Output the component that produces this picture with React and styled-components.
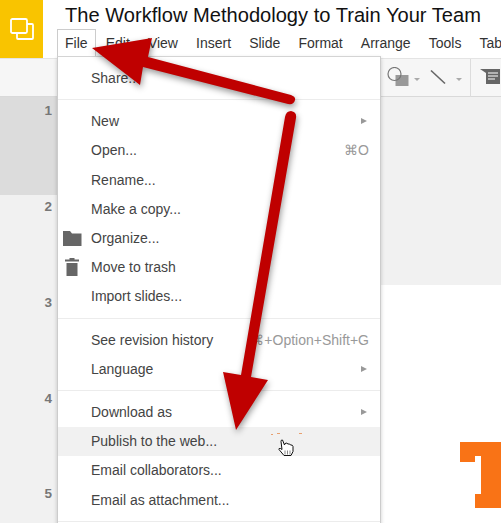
import React from 'react';
import styled, { createGlobalStyle } from 'styled-components';

const GlobalStyle = createGlobalStyle`
  html, body {
    margin: 0;
    padding: 0;
    background: white;
    overflow: hidden;
  }
`;

const Page = styled.div`
  position: relative;
  width: 501px;
  height: 523px;
  overflow: hidden;
  font-family: "Liberation Sans", Arial, sans-serif;
  display: flex;
  flex-direction: column;
`;

const Header = styled.header`
  height: 58px;
  flex: none;
  display: flex;
  background: white;
`;

const Logo = styled.div`
  width: 43px;
  height: 58px;
  background: #f9c400;
  display: flex;
  align-items: center;
  justify-content: center;
`;

const TitleBlock = styled.div`
  margin-left: 14px;
  min-width: 0;
  flex: 1;
`;

const Title = styled.h1`
  margin: 3px 0 0 8px;
  font-size: 20.1px;
  line-height: 24px;
  font-weight: 400;
  color: #111;
  white-space: nowrap;
`;

const MenuBar = styled.nav`
  display: flex;
  height: 27px;
  margin-top: 2px;
  white-space: nowrap;
`;

const MenuLabel = styled.div`
  box-sizing: border-box;
  height: 27px;
  padding: 0 7px;
  margin-right: 2.1px;
  font-size: 14px;
  line-height: 26px;
  color: #333;
  border: 1px solid ${props => (props.$open ? '#ccc' : 'transparent')};
  border-bottom: 0;
  background: white;
  position: relative;
  z-index: ${props => (props.$open ? 3 : 0)};
`;

const Toolbar = styled.div`
  height: 39px;
  flex: none;
  box-sizing: border-box;
  background: #f6f6f6;
  border-top: 1px solid #e4e4e4;
  border-bottom: 1px solid #d9d9d9;
  display: flex;
  align-items: center;
  justify-content: flex-end;
  gap: 5px;
  padding-right: 1px;
`;

const ToolIcon = styled.svg`
  flex: none;
  margin-left: ${props => props.$ml ?? 0}px;
`;

const ToolDivider = styled.div`
  width: 1px;
  height: 38px;
  background: #dcdcdc;
  margin: 0 4px 0 3px;
`;

const Caret = styled.span`
  width: 0;
  height: 0;
  border-left: 3px solid transparent;
  border-right: 3px solid transparent;
  border-top: 3px solid #aaa;
  margin-top: 3px;
  margin-left: ${props => props.$ml ?? 0}px;
`;

const Body = styled.div`
  flex: 1;
  display: flex;
  min-height: 0;
`;

const Filmstrip = styled.aside`
  width: 57px;
  flex: none;
  background: #f1f1f1;
  display: flex;
  flex-direction: column;
`;

const SlideRow = styled.div`
  box-sizing: border-box;
  height: ${props => props.$height}px;
  flex: none;
  background: ${props => (props.$selected ? '#dcdcdc' : 'transparent')};
  padding: ${props => (props.$selected ? 7 : 5.5)}px 5px 0 0;
  text-align: right;
  font-size: 13.5px;
  line-height: 14px;
  font-weight: 700;
  color: #777;
`;

const Canvas = styled.main`
  flex: 1;
  display: flex;
  flex-direction: column;
`;

const CanvasGrey = styled.div`
  height: 188px;
  flex: none;
  background: #f1f1f1;
`;

const CanvasSlide = styled.div`
  flex: 1;
  background: white;
  display: flex;
  justify-content: flex-end;
  align-items: flex-start;
  padding-top: 157px;
`;

const Menu = styled.div`
  position: absolute;
  top: 56px;
  left: 57px;
  width: 324px;
  height: 480px;
  box-sizing: border-box;
  background: white;
  border: 1px solid #ccc;
  border-top-color: #d4d4d4;
  box-shadow: 0 2px 4px rgba(0, 0, 0, 0.2);
  padding-top: 6.5px;
  z-index: 2;
`;

const Item = styled.div`
  height: 29.2px;
  display: flex;
  align-items: center;
  padding: 0 11px 0 33px;
  position: relative;
  font-size: 14px;
  color: #444;
  background: ${props => (props.$hover ? '#f1f1f1' : 'transparent')};
  white-space: nowrap;
`;

const ItemIcon = styled.span`
  position: absolute;
  left: 4px;
  top: 50%;
  transform: translateY(-50%);
  display: flex;
`;

const Shortcut = styled.span`
  margin-left: auto;
  color: #999;
`;

const SubArrow = styled.span`
  margin-left: auto;
  margin-right: 2px;
  width: 0;
  height: 0;
  border-top: 3.5px solid transparent;
  border-bottom: 3.5px solid transparent;
  border-left: 6px solid #999;
`;

const Separator = styled.div`
  height: 1px;
  background: #ececec;
  margin: ${props => props.$top ?? 6}px 0 ${props => props.$bottom ?? 7}px;
`;

const Overlay = styled.svg`
  position: absolute;
  top: 0;
  left: 0;
  z-index: 4;
  pointer-events: none;
  overflow: visible;
`;

const ArrowShape = styled.path`
  fill: #bf0000;
  filter: drop-shadow(1px 3px 3px rgba(0, 0, 0, 0.4));
`;

const menus = ['Edit', 'View', 'Insert', 'Slide', 'Format', 'Arrange', 'Tools', 'Table'];

const slides = [
  { n: 1, height: 97.5, selected: true },
  { n: 2, height: 95.5 },
  { n: 3, height: 96 },
  { n: 4, height: 95.5 },
  { n: 5, height: 60 },
];

const FolderIcon = () => (
  <svg width="20" height="16" viewBox="0 0 20 16">
    <path d="M1 1h7l2 2.500h9.500V16H1z" fill="#666" />
  </svg>
);

const TrashIcon = () => (
  <svg width="20" height="18" viewBox="0 0 20 18">
    <path d="M7.500 0h5v1.500H17v2H3v-2h4.500zM4.500 5h11v13h-11z" fill="#666" />
  </svg>
);

const App = () => (
  <Page>
    <GlobalStyle />
    <Header>
      <Logo>
        <svg width="24" height="22" viewBox="0 0 24 22" fill="none" stroke="white" strokeWidth="1.800">
          <rect x="1" y="1" width="16" height="14" rx="1.500" fill="#f9c400" />
          <path d="M17 6h5a1 1 0 0 1 1 1v13a1 1 0 0 1-1 1H8a1 1 0 0 1-1-1v-5" />
        </svg>
      </Logo>
      <TitleBlock>
        <Title>The Workflow Methodology to Train Your Team</Title>
        <MenuBar>
          <MenuLabel $open>File</MenuLabel>
          {menus.map(label => (
            <MenuLabel key={label}>{label}</MenuLabel>
          ))}
        </MenuBar>
      </TitleBlock>
    </Header>

    <Toolbar>
      <ToolIcon width="22" height="22" viewBox="0 0 22 22">
        <rect x="8.500" y="8" width="13" height="11" fill="#999" />
        <circle cx="7.500" cy="7" r="6.500" fill="none" stroke="#777" strokeWidth="1.200" />
      </ToolIcon>
      <Caret />
      <ToolIcon $ml={3.5} width="18" height="18" viewBox="0 0 18 18">
        <path d="M2 1.500l14 13" stroke="#666" strokeWidth="1.600" />
      </ToolIcon>
      <Caret $ml={4.5} />
      <ToolDivider />
      <ToolIcon width="20" height="18" viewBox="0 0 20 18">
        <path d="M0 0h20v15H6V4z" fill="#666" />
        <path d="M8 4h10M8 7h10M8 10h7" stroke="white" strokeWidth="1.200" />
      </ToolIcon>
    </Toolbar>

    <Body>
      <Filmstrip>
        {slides.map(s => (
          <SlideRow key={s.n} $height={s.height} $selected={s.selected}>{s.n}</SlideRow>
        ))}
      </Filmstrip>
      <Canvas>
        <CanvasGrey />
        <CanvasSlide>
          <svg width="41" height="66" viewBox="0 0 41 66">
            <path d="M0 0h41v66H15V52h6V14h-6v6H0z" fill="#f97316" />
          </svg>
        </CanvasSlide>
      </Canvas>
    </Body>

    <Menu>
      <Item>Share...</Item>
      <Separator />
      <Item>New<SubArrow /></Item>
      <Item>Open...<Shortcut>⌘O</Shortcut></Item>
      <Item>Rename...</Item>
      <Item>Make a copy...</Item>
      <Item><ItemIcon><FolderIcon /></ItemIcon>Organize...</Item>
      <Item><ItemIcon><TrashIcon /></ItemIcon>Move to trash</Item>
      <Item>Import slides...</Item>
      <Separator $top={7} $bottom={6} />
      <Item>See revision history<Shortcut>⌘+Option+Shift+G</Shortcut></Item>
      <Item>Language<SubArrow /></Item>
      <Separator $top={6.5} $bottom={6.5} />
      <Item>Download as<SubArrow /></Item>
      <Item $hover>Publish to the web...</Item>
      <Item>Email collaborators...</Item>
      <Item>Email as attachment...</Item>
      <Separator $top={7} />
    </Menu>

    <Overlay width="501" height="523" viewBox="0 0 501 523">
      <ArrowShape d="M92 48L152 38L148 57L291 95Q296 97 295 100Q294 105 288 104L143 67L140 85Z" />
      <ArrowShape d="M285 117Q286 111 291 111Q297 112 296 118L251 377L268 380L236 430L223 372L241 375Z" />
      <path d="M271 434h2v1h-2zM277 433h3v1h-3zM299 433h3v1h-3z" fill="#e8a070" />
      <g transform="translate(-2 -10.500)">
        <path
          d="M283 452q0-2 1.500-1.500l2 5 .5-1.500q2-1 3 .5 2-.5 2.500 1 2-.5 2.500 1.500v5l-2 4h-7l-5-6q-.5-1.500 1.500-1l1.500 1z"
          fill="white"
          stroke="#111"
          strokeWidth="1"
        />
        <path d="M287 461v4M289.500 461v4M292 461v4" stroke="#555" strokeWidth="0.700" />
      </g>
    </Overlay>
  </Page>
);

export default App;
